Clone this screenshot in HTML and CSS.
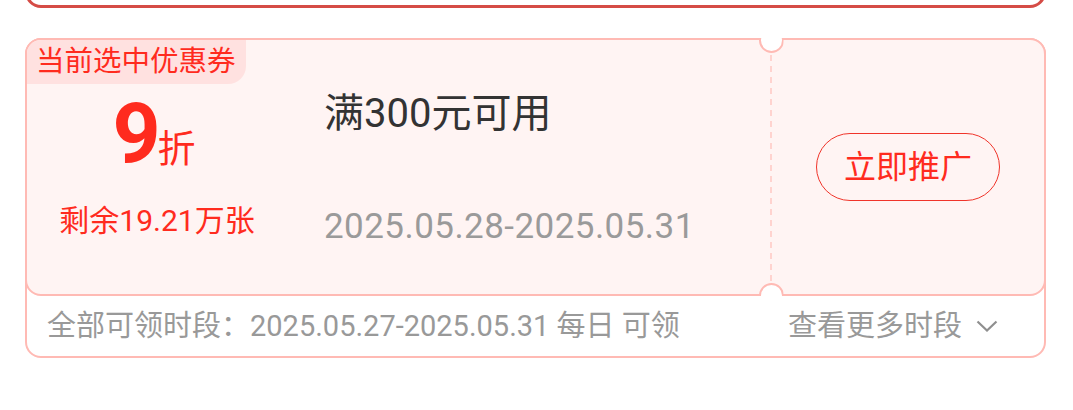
FILE: index.html
```html
<!DOCTYPE html>
<html>
<head>
	<title>优惠券</title>
	<meta charset="utf-8">
	<meta name="viewport" content="width=device-width, initial-scale=1">
	<link rel="stylesheet" href="styles.css">
</head>
<body>
	<div class="page">
		<div class="prevCard"></div>
		<div class="coupon">
			<div class="ticket">
				<span class="badge">当前选中优惠券</span>
				<div class="discount">
					<div class="rate">
						<span class="rateNum">9</span>
						<span class="rateUnit">折</span>
					</div>
					<div class="stock">剩余19.21万张</div>
				</div>
				<div class="info">
					<div class="infoTitle">满300元可用</div>
					<div class="infoDate">2025.05.28-2025.05.31</div>
				</div>
				<div class="divider">
					<span class="notch notchTop"></span>
					<span class="notch notchBottom"></span>
				</div>
				<div class="action">
					<button class="promoteButton">立即推广</button>
				</div>
			</div>
			<div class="couponFooter">
				<span class="period">全部可领时段：2025.05.27-2025.05.31 每日 可领</span>
				<span class="more">
					查看更多时段
					<svg viewBox="0 0 22 12" width="22" height="12" xmlns="http://www.w3.org/2000/svg">
						<polyline points="1.5 1.5 11 10.5 20.5 1.5" fill="none" stroke="#8f8f8f" stroke-width="2.2" />
					</svg>
				</span>
			</div>
		</div>
	</div>
</body>
</html>
```

FILE: styles.css
```css
body {
	padding: 0;
	margin: 0;
	border: 0;
	overflow: hidden;
	background: #fff;
	font-family: Roboto, "Noto Sans CJK SC", sans-serif;
}

.page {
	padding: 0 27px 0 25px;
}

/* previous coupon, only its bottom edge shows */
.prevCard {
	height: 60px;
	margin-top: -52px;
	box-sizing: border-box;
	border: 3px solid #d54c46;
	border-radius: 16px;
}

.coupon {
	margin-top: 30px;
	border: 2px solid #ffbab4;
	border-radius: 16px;
	background: #fff;
}

.ticket {
	position: relative;
	display: flex;
	height: 258px;
	box-sizing: border-box;
	margin: -2px -2px 0;
	border: 2px solid #ffbab4;
	border-radius: 16px;
	background: #fff4f3;
}

.badge {
	position: absolute;
	top: 0;
	left: 0;
	height: 44px;
	padding: 0 10px 0 9px;
	font-size: 28.5px;
	line-height: 44px;
	color: #ff2b1e;
	background: #ffe1e0;
	border-radius: 14px 0 18px 0;
}

.discount {
	width: 260px;
	padding-top: 52px;
	display: flex;
	flex-direction: column;
	align-items: center;
	color: #ff2b1e;
}

.rate {
	display: flex;
	align-items: baseline;
	margin-right: 6px;
}

.rateNum {
	font-size: 84px;
	font-weight: 700;
	line-height: 84px;
	letter-spacing: -5px;
}

.rateUnit {
	margin-left: 2px;
	font-size: 38px;
	line-height: 38px;
}

.stock {
	margin-top: 30px;
	font-size: 30px;
	line-height: 30px;
}

.info {
	flex: 1;
	padding: 54px 0 0 37px;
}

.infoTitle {
	font-size: 40px;
	line-height: 39px;
	color: #333;
}

.infoDate {
	margin-top: 76px;
	font-size: 35px;
	line-height: 35px;
	letter-spacing: 0.45px;
	color: #9a9a9a;
}

.divider {
	position: relative;
	width: 2px;
	padding: 15px 0 13px;
	background: repeating-linear-gradient(#ffd3cf 0 6px, transparent 6px 11px) content-box;
}

.notch {
	position: absolute;
	left: -11.5px;
	width: 25px;
	height: 25px;
	box-sizing: border-box;
	border: 2px solid #ffbab4;
	border-radius: 50%;
	background: #fff;
}

.notchTop {
	top: -12px;
	clip-path: inset(10px 0 0 0);
}

.notchBottom {
	bottom: -14px;
	clip-path: inset(0 0 12px 0);
}

.action {
	width: 272px;
	display: flex;
	align-items: center;
	justify-content: center;
}

.promoteButton {
	height: 68px;
	padding: 0 27px;
	font-family: inherit;
	font-size: 32px;
	line-height: 66px;
	color: #ff2b1e;
	background: none;
	border: 1px solid #f0342a;
	border-radius: 34px;
	cursor: pointer;
}

.couponFooter {
	height: 60px;
	padding: 0 46px 0 20px;
	display: flex;
	align-items: center;
	justify-content: space-between;
	font-size: 29px;
	line-height: 29px;
	color: #999;
}

.more {
	display: flex;
	align-items: center;
}

.more svg {
	margin-left: 14px;
}
```
